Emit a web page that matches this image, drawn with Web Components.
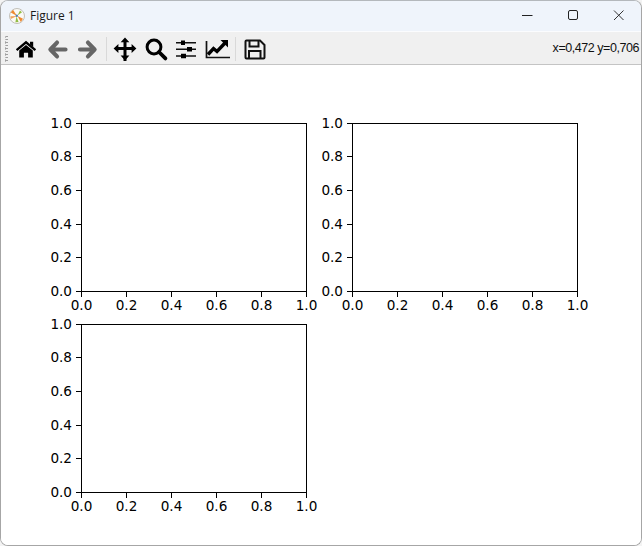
<!DOCTYPE html>
<html>
<head>
<meta charset="utf-8">
<title>Figure 1</title>
<style>
  html, body { margin: 0; padding: 0; background: #f3f3f3; }
</style>
</head>
<body>
<figure-window>
  <title-bar slot="title" caption="Figure 1"></title-bar>
  <tool-bar slot="tools" coords="x=0,472 y=0,706"></tool-bar>
  <plot-grid>
    <plot-axes></plot-axes>
    <plot-axes></plot-axes>
    <plot-axes></plot-axes>
  </plot-grid>
</figure-window>

<script>
class FigureWindow extends HTMLElement {
  constructor() {
    super();
    this.attachShadow({ mode: "open" }).innerHTML = `
      <style>
        :host {
          display: flex;
          flex-direction: column;
          width: 642px;
          height: 546px;
          box-sizing: border-box;
          border: 1px solid #a6a6a6;
          border-top-color: #b4b8bc;
          border-radius: 8px;
          overflow: hidden;
          background: #fff;
        }
      </style>
      <slot name="title"></slot>
      <slot name="tools"></slot>
      <slot></slot>
    `;
  }
}

class TitleBar extends HTMLElement {
  constructor() {
    super();
    const caption = this.getAttribute("caption");
    this.attachShadow({ mode: "open" }).innerHTML = `
      <style>
        :host {
          display: flex;
          align-items: center;
          height: 30px;
          background: #eff4fb;
          border-bottom: 1px solid #fbfcfe;
          font: 12px "Open Sans", "Noto Sans", sans-serif;
          color: #1a1a1a;
        }
        .logo { margin-left: 8px; width: 16px; height: 16px; flex: none; }
        .caption { margin-left: 5px; flex: 1; padding-bottom: 2px; }
        .ctl { width: 46px; height: 30px; flex: none; display: block; }
      </style>
      <svg class="logo" viewBox="0 0 16 16">
        <circle cx="8" cy="8" r="7.5" fill="#fbfaf6" stroke="#c2bfb8"/>
        <path d="M8 8 1.800 4.600 4 1.800Z" fill="#ee8a32"/>
        <path d="M8 8 1.400 8.200 1.800 11Z" fill="#f2a55e"/>
        <path d="M8.500 8 14 10.800 11.800 14Z" fill="#ee8a32"/>
        <path d="M8.500 7.500 11 2.600 13 4.200Z" fill="#93bd45"/>
        <path d="M7.500 8.500 6.400 14.200 9.600 14Z" fill="#93bd45"/>
        <circle cx="7.800" cy="7.800" r="1.200" fill="#4f7fb5"/>
      </svg>
      <span class="caption">${caption}</span>
      <svg class="ctl" viewBox="0 0 46 30"><path d="M19 14.5H29.5" stroke="#222" fill="none"/></svg>
      <svg class="ctl" viewBox="0 0 46 30"><rect x="19.5" y="9.5" width="9" height="9" rx="1.5" stroke="#222" fill="none"/></svg>
      <svg class="ctl" viewBox="0 0 46 30"><path d="M19 9.5 28.5 19M28.5 9.5 19 19" stroke="#333" fill="none"/></svg>
    `;
  }
}

// icons are drawn in a 24x24 box
const ICONS = {
  home: `<path d="M2.6 13.2 12 5.4l9.4 7.8" fill="none" stroke="#000" stroke-width="2.4"/>
         <path d="M16 4.8h3.2v5.4L16 7.6Z" fill="#000"/>
         <path d="M5.2 13.4 12 7.9l6.8 5.5v7.1h-4.7v-4.8H9.9v4.8H5.2Z" fill="#000"/>`,
  back: `<path d="M20.5 12.5H6.5M12 5.6 5.4 12.5l6.6 6.9" fill="none" stroke="#666" stroke-width="4.2" stroke-linecap="round" stroke-linejoin="round"/>`,
  forward: `<path d="M5 12.5h14M13 5.6l6.6 6.9-6.6 6.9" fill="none" stroke="#666" stroke-width="4.2" stroke-linecap="round" stroke-linejoin="round"/>`,
  move: `<path d="M12 4v20M2 11.5h20" stroke="#000" stroke-width="3" fill="none"/>
         <path d="M12 0.4 16.4 5.2H7.6ZM12 23.4 7.6 18.6H16.4ZM0.6 11.5 5.4 7.1V15.9ZM23.4 11.5 18.6 15.9V7.1Z" fill="#000"/>`,
  zoom: `<circle cx="10" cy="10" r="6.9" fill="none" stroke="#000" stroke-width="3"/>
         <path d="M15 15l6.4 6.4" stroke="#000" stroke-width="3.8" stroke-linecap="round"/>`,
  sliders: `<path d="M2 5.7h20M2 12.3h20M2 19h20" stroke="#111" stroke-width="1.4"/>
            <path d="M7 3.5h4v4.5H7ZM13 10h5v4.6h-5ZM7 16.8h5v4.5H7Z" fill="#000"/>`,
  chart: `<path d="M1.5 4v16.5H25" fill="none" stroke="#111" stroke-width="1.7"/>
          <path d="M3 17.5 8.5 11.5l3.5 3 8-8.5" fill="none" stroke="#000" stroke-width="3.4"/>
          <path d="M15.5 3h7.5v7.5Z" fill="#000"/>`,
  save: `<path d="M3.5 3.5h13.5l4.5 4.5v12.5a1 1 0 0 1-1 1H3.5a1 1 0 0 1-1-1V4.5a1 1 0 0 1 1-1Z" fill="none" stroke="#111" stroke-width="2"/>
         <path d="M6.5 4v5.5h9V4M6 21.5v-7.500h11.500v7.500" fill="none" stroke="#111" stroke-width="2"/>`
};

class ToolBar extends HTMLElement {
  constructor() {
    super();
    const btn = (name) => `<svg class="btn" viewBox="0 0 24 24">${ICONS[name]}</svg>`;
    this.attachShadow({ mode: "open" }).innerHTML = `
      <style>
        :host {
          display: flex;
          height: 32px;
          background: #f0f0f0;
          border-bottom: 1px solid #c4c4c4;
        }
        .grip {
          width: 2px;
          margin: 4px 3px 2px 4px;
          background: repeating-linear-gradient(#9f9f9f 0 1px, transparent 1px 3px);
          border-left: 1px dotted #bbb;
        }
        .tools { display: flex; align-items: flex-start; padding-top: 5px; margin-left: -.35px; }
        .btn { width: 24px; height: 24px; margin: 0 3.35px; flex: none; display: block; overflow: visible; }
        .sep { width: 1px; height: 24px; margin: 0 3px; background: #d9d9d9; flex: none; }
        .coords {
          margin-left: auto;
          padding: 9px 2px 0 0;
          font: 12.5px "Liberation Sans", sans-serif;
          letter-spacing: -.45px;
          color: #111;
          white-space: nowrap;
        }
      </style>
      <div class="grip"></div>
      <div class="tools">
        ${btn("home")}${btn("back")}${btn("forward")}
        <div class="sep"></div>
        ${btn("move")}${btn("zoom")}${btn("sliders")}${btn("chart")}
        <div class="sep"></div>
        ${btn("save")}
      </div>
      <span class="coords">${this.getAttribute("coords")}</span>
    `;
  }
}

class PlotGrid extends HTMLElement {
  constructor() {
    super();
    this.attachShadow({ mode: "open" }).innerHTML = `
      <style>
        :host {
          display: grid;
          grid-template-columns: 226px 226px;
          grid-auto-rows: 169px;
          column-gap: 45px;
          row-gap: 32px;
          padding: 58px 0 0 80px;
          flex: 1;
          background: #fff;
        }
      </style>
      <slot></slot>
    `;
  }
}

class PlotAxes extends HTMLElement {
  constructor() {
    super();
    const labels = ["0.0", "0.2", "0.4", "0.6", "0.8", "1.0"];
    const yPos = [168, 134, 101, 67, 33, 0];
    const xTicks = labels.map((t, i) => `
      <div class="xt" style="left:${i * 45 - 1}px"><b></b><span>${t}</span></div>`).join("");
    const yTicks = labels.map((t, i) => `
      <div class="yt" style="top:${yPos[i] - 1}px"><span>${t}</span><b></b></div>`).join("");
    this.attachShadow({ mode: "open" }).innerHTML = `
      <style>
        :host {
          display: block;
          position: relative;
          box-sizing: border-box;
          width: 226px;
          height: 169px;
          border: 1px solid #000;
          font: 13.6px "DejaVu Sans", sans-serif;
          color: #000;
        }
        .xt { position: absolute; top: 100%; width: 1px; margin-top: 1px; }
        .xt b { display: block; width: 1px; height: 5px; background: #000; }
        .xt span { position: absolute; top: 5px; left: 50%; transform: translateX(-50%); line-height: 16px; }
        .yt { position: absolute; left: -6px; height: 1px; width: 5px; }
        .yt b { display: block; width: 5px; height: 1px; background: #000; }
        .yt span { position: absolute; right: 9px; top: -8px; line-height: 16px; }
      </style>
      ${xTicks}${yTicks}
    `;
  }
}

customElements.define("figure-window", FigureWindow);
customElements.define("title-bar", TitleBar);
customElements.define("tool-bar", ToolBar);
customElements.define("plot-grid", PlotGrid);
customElements.define("plot-axes", PlotAxes);
</script>
</body>
</html>
